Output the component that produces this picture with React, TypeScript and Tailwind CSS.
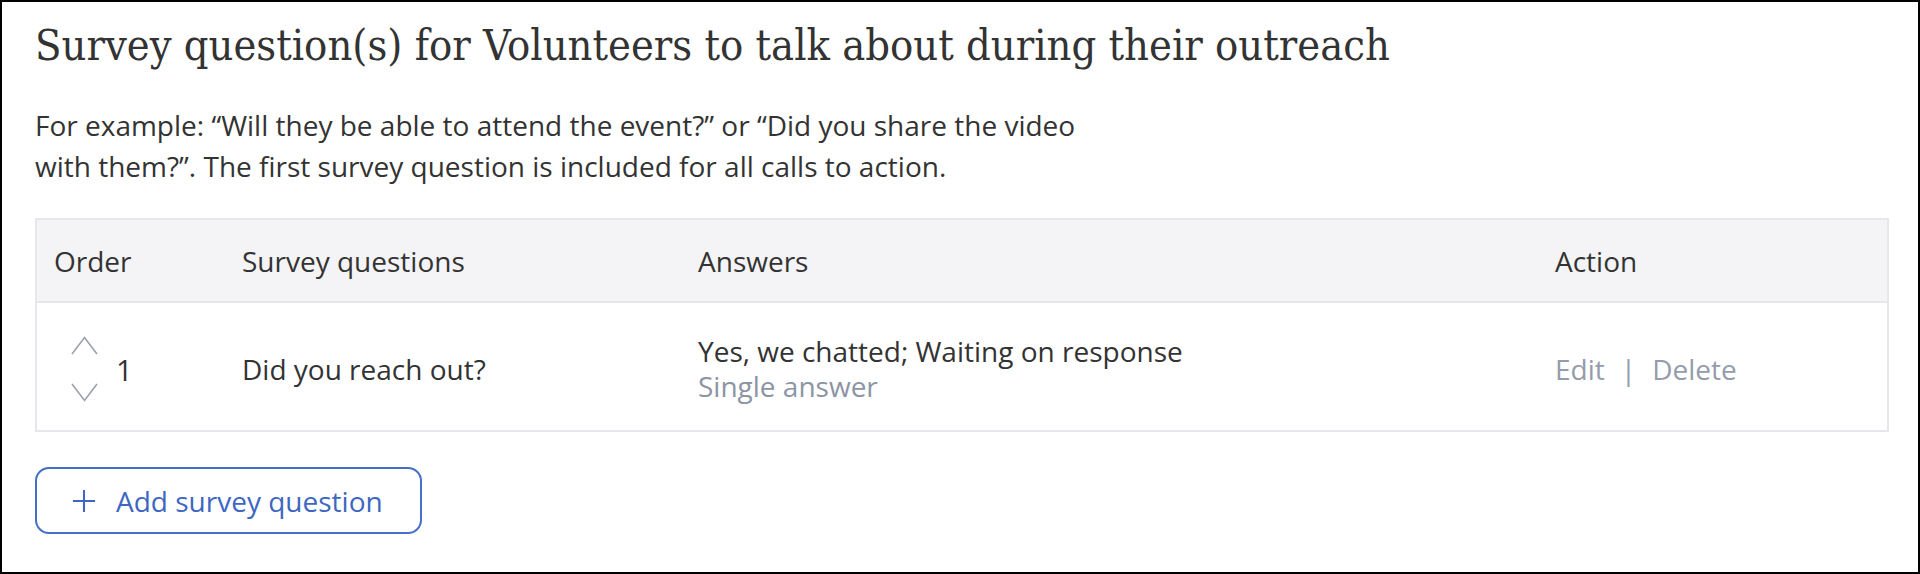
const sans = { fontFamily: '"Open Sans", "Noto Sans", sans-serif' };

function Chevron({ up }: { up?: boolean }) {
  return (
    <svg width="27" height="19" viewBox="0 0 27 19" fill="none" stroke="#9aa0ad" strokeWidth="1.6">
      {up ? <polyline points="1,18 13.5,1.5 26,18" /> : <polyline points="1,1 13.5,17.5 26,1" />}
    </svg>
  );
}

export default function App() {
  return (
    <div className="h-[574px] w-[1920px] border-2 border-black bg-white" style={sans}>
      <div className="px-[33px] pt-[17px]">
        <h1
          className="text-[43px] leading-[52px] text-[#333]"
          style={{ fontFamily: '"DejaVu Serif Condensed", "DejaVu Serif", serif', fontWeight: 300 }}
        >
          Survey question(s) for Volunteers to talk about during their outreach
        </h1>

        <p className="mt-[34px] w-[1100px] text-[28px] leading-[41px] text-[#333]">
          For example: “Will they be able to attend the event?” or “Did you share the video with them?”. The first survey
          question is included for all calls to action.
        </p>

        <div className="mt-[31px] w-[1854px] border-2 border-[#e6e7eb]">
          <div className="grid h-[83px] grid-cols-[188px_456px_857px_1fr] items-center border-b-2 border-[#e6e7eb] bg-[#f4f4f6] pl-[17px] text-[28px] text-[#333]">
            <div>Order</div>
            <div>Survey questions</div>
            <div>Answers</div>
            <div>Action</div>
          </div>
          <div className="grid h-[127px] grid-cols-[188px_456px_857px_1fr] items-center pt-[5px] pl-[17px] text-[28px] text-[#333]">
            <div className="flex items-center">
              <div className="ml-[17px] flex flex-col gap-[28px]">
                <Chevron up />
                <Chevron />
              </div>
              <span className="ml-[18px] text-[29px] leading-none">1</span>
            </div>
            <div>Did you reach out?</div>
            <div className="leading-[35px]">
              <div>Yes, we chatted; Waiting on response</div>
              <div className="text-[#8d94a3]">Single answer</div>
            </div>
            <div className="flex items-center text-[#959cab]">
              <span>Edit</span>
              <span className="mx-[16px]">|</span>
              <span>Delete</span>
            </div>
          </div>
        </div>

        <button className="mt-[35px] flex h-[67px] w-[387px] items-center rounded-[14px] border-2 border-[#4470c8] pl-[28px] text-[28px] text-[#3d67c2]">
          <svg width="38" height="38" viewBox="0 0 24 24" fill="none" stroke="currentColor" strokeWidth="1.3">
            <path d="M5 12h14M12 5v14" />
          </svg>
          <span className="ml-[13px]">Add survey question</span>
        </button>
      </div>
    </div>
  );
}
